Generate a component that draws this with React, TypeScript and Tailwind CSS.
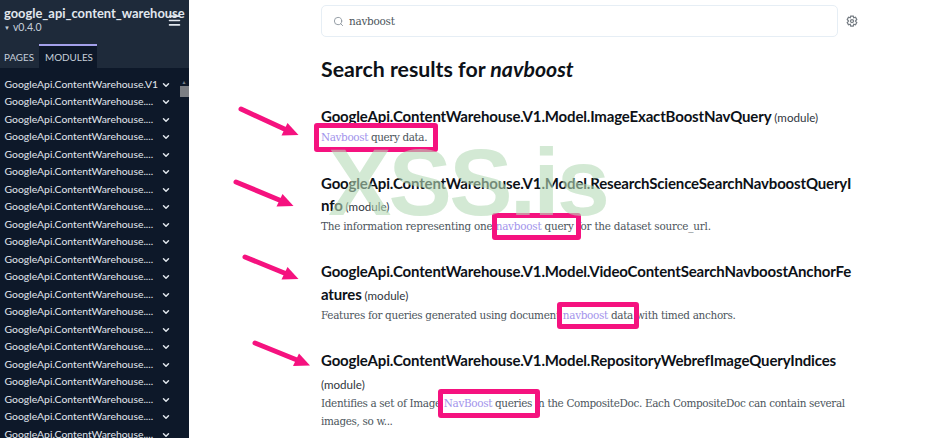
import React from 'react'
import {ChevronDown, Menu, Search} from 'lucide-react'

const modules = ['GoogleApi.ContentWarehouse.V1', ...Array(20).fill('GoogleApi.ContentWarehouse....')]

const results = [
  {
    title: ['GoogleApi.ContentWarehouse.V1.Model.ImageExactBoostNavQuery'],
    tracking: 'tracking-[-0.38px]',
    lines: [['', 'Navboost', ' query data.']],
  },
  {
    title: ['GoogleApi.ContentWarehouse.V1.Model.ResearchScienceSearchNavboostQueryI', 'nfo'],
    tracking: 'tracking-[-0.23px]',
    lines: [['The information representing one ', 'navboost', ' query for the dataset source_url.']],
  },
  {
    title: ['GoogleApi.ContentWarehouse.V1.Model.VideoContentSearchNavboostAnchorFe', 'atures'],
    tracking: 'tracking-[-0.31px]',
    lines: [['Features for queries generated using document ', 'navboost', ' data with timed anchors.']],
  },
  {
    title: ['GoogleApi.ContentWarehouse.V1.Model.RepositoryWebrefImageQueryIndices', ''],
    tracking: 'tracking-[-0.34px]',
    lines: [
      ['Identifies a set of Image ', 'NavBoost', ' queries in the CompositeDoc. Each CompositeDoc can contain several'],
      ['images, so w...', '', ''],
    ],
  },
]

const Sidebar = () => (
  <aside className="flex w-[189px] shrink-0 flex-col bg-[#0d1829] font-['Lato',sans-serif] text-[#e1e7ee]">
    <div className="flex h-[68px] shrink-0 flex-col justify-between bg-[#1e2a3a]">
      <div className="flex justify-between pt-[5px] pl-1">
        <div className="w-[162px] whitespace-nowrap">
          <div className="text-[12.9px] leading-[17px] font-bold">google_api_content_warehouse</div>
          <div className="flex items-center gap-[3px] text-[10.5px] leading-[11px] text-[#c6cfda]">
            <span className="text-[6px]">▼</span>v0.4.0
          </div>
        </div>
        <Menu className="mt-[8px] mr-[7px] size-[15px] shrink-0" strokeWidth={2.5} />
      </div>
      <div className="flex h-6 text-[#c6cfda]">
        <span className="w-[39px] pt-px pl-1 text-[9.8px] leading-6">PAGES</span>
        <span className="w-[58px] border-t-[2.5px] border-[#a3a0ea] bg-[#0d1829] pl-[6px] text-[9.9px] leading-[23px]">
          MODULES
        </span>
      </div>
    </div>
    <div className="flex justify-between pt-2">
      <ul className="pl-[4.5px]">
        {modules.map((name, i) => (
          <li key={i} className="flex h-[17.5px] w-[166px] items-center justify-between text-[10.4px] whitespace-nowrap">
            {name}
            <ChevronDown className="size-[10px]" strokeWidth={3.5} />
          </li>
        ))}
      </ul>
      <div className="flex w-[10px] flex-col items-center pt-[3px]">
        <span className="text-[5px] leading-[7px] text-[#77808c]">▲</span>
        <span className="h-[11px] w-[9px] bg-[#7c7f84]" />
      </div>
    </div>
  </aside>
)

const Arrow = ({className, dx, dy}: {className: string; dx: number; dy: number}) => (
  <svg className={className} width="68" height="36" viewBox="-4 -4 68 36" fill="#f5127f">
    <path d={`M0 0 ${dx - 13} ${dy - 5.5}`} stroke="#f5127f" strokeWidth="5" strokeLinecap="round" />
    <path d={`M${dx} ${dy} ${dx - 11} ${dy - 12} ${dx - 17} ${dy + 0.5}z`} />
  </svg>
)

const Frame = ({className}: {className: string}) => (
  <div className={`absolute rounded-[3px] border-[5px] border-[#f5127f] ${className}`} />
)

export default function App() {
  return (
    <div className="relative flex h-[438px] w-[933px] overflow-hidden bg-white">
      <Sidebar />
      <main className="w-[744px] pt-[5px] pl-[132px]">
        <div className="flex items-center gap-2">
          <div className="flex h-8 w-[517px] items-center gap-[5px] rounded-[5px] border border-[#e6eef5] pl-[11px]">
            <Search className="size-[11px] text-[#8d969f]" strokeWidth={2} />
            <span className="pt-px font-['DejaVu_Serif_Condensed','DejaVu_Serif',serif] text-[11.6px] tracking-[-0.25px] text-[#4c555c]">
              navboost
            </span>
          </div>
          <svg className="size-3" viewBox="0 0 24 24" fill="none" stroke="#757c83" strokeWidth="2.5">
            <path d="M9.5 2h5l1 3.5 3.5-1 2.5 4.5L19 12l2.5 3-2.5 4.5-3.5-1-1 3.5h-5l-1-3.5-3.5 1L2.5 15 5 12 2.5 9 5 4.5l3.5 1z" />
            <circle cx="12" cy="12" r="3" />
          </svg>
        </div>
        <h1 className="mt-[19px] font-['Lato',sans-serif] text-[21.3px] leading-[26px] font-bold text-[#0d1117]">
          Search results for <em>navboost</em>
        </h1>
        <div className="mt-[23.2px] flex flex-col gap-[25.4px]">
          {results.map((r, i) => (
            <section key={i} className="whitespace-nowrap">
              <h2 className="font-['Lato',sans-serif] text-[15px] leading-[22.3px] font-bold tracking-[-0.16px] text-[#0d1117]">
                {r.title.map((line, j) => (
                  <div key={j} className="h-[22.3px]">
                    {line}
                    {j === r.title.length - 1 && (
                      <small className="text-[11.6px] font-normal tracking-normal text-[#30363d]">
                        {line ? ' ' : ''}(module)
                      </small>
                    )}
                  </div>
                ))}
              </h2>
              <div className={`pt-[1.5px] font-['DejaVu_Serif_Condensed','DejaVu_Serif',serif] text-[11.6px] ${r.tracking}`}>
                {r.lines.map(([before, match, after], j) => (
                  <p key={j} className="leading-[17.3px] whitespace-pre text-[#4c555c]">
                    {before}
                    <span className="text-[#a394ec]">{match}</span>
                    {after}
                  </p>
                ))}
              </div>
            </section>
          ))}
        </div>
      </main>
      <Arrow className="absolute top-[105px] left-[237px]" dx={57.5} dy={26} />
      <Arrow className="absolute top-[178px] left-[232px]" dx={57.5} dy={24} />
      <Arrow className="absolute top-[253px] left-[241px]" dx={53.5} dy={22} />
      <Arrow className="absolute top-[339px] left-[251px]" dx={55} dy={22.5} />
      <Frame className="top-[123px] left-[314px] h-[29px] w-[124px]" />
      <Frame className="top-[213px] left-[492px] h-[27px] w-[89px]" />
      <Frame className="top-[302px] left-[557px] h-[27px] w-[82px]" />
      <Frame className="top-[389px] left-[438px] h-[29px] w-[102px]" />
      <div className="absolute top-[128px] left-[328px] font-['Liberation_Sans',sans-serif] text-[95px] leading-[108px] font-bold tracking-[-2.8px] whitespace-nowrap text-[#b5dab8]/60">
        XSS.is
      </div>
    </div>
  )
}
